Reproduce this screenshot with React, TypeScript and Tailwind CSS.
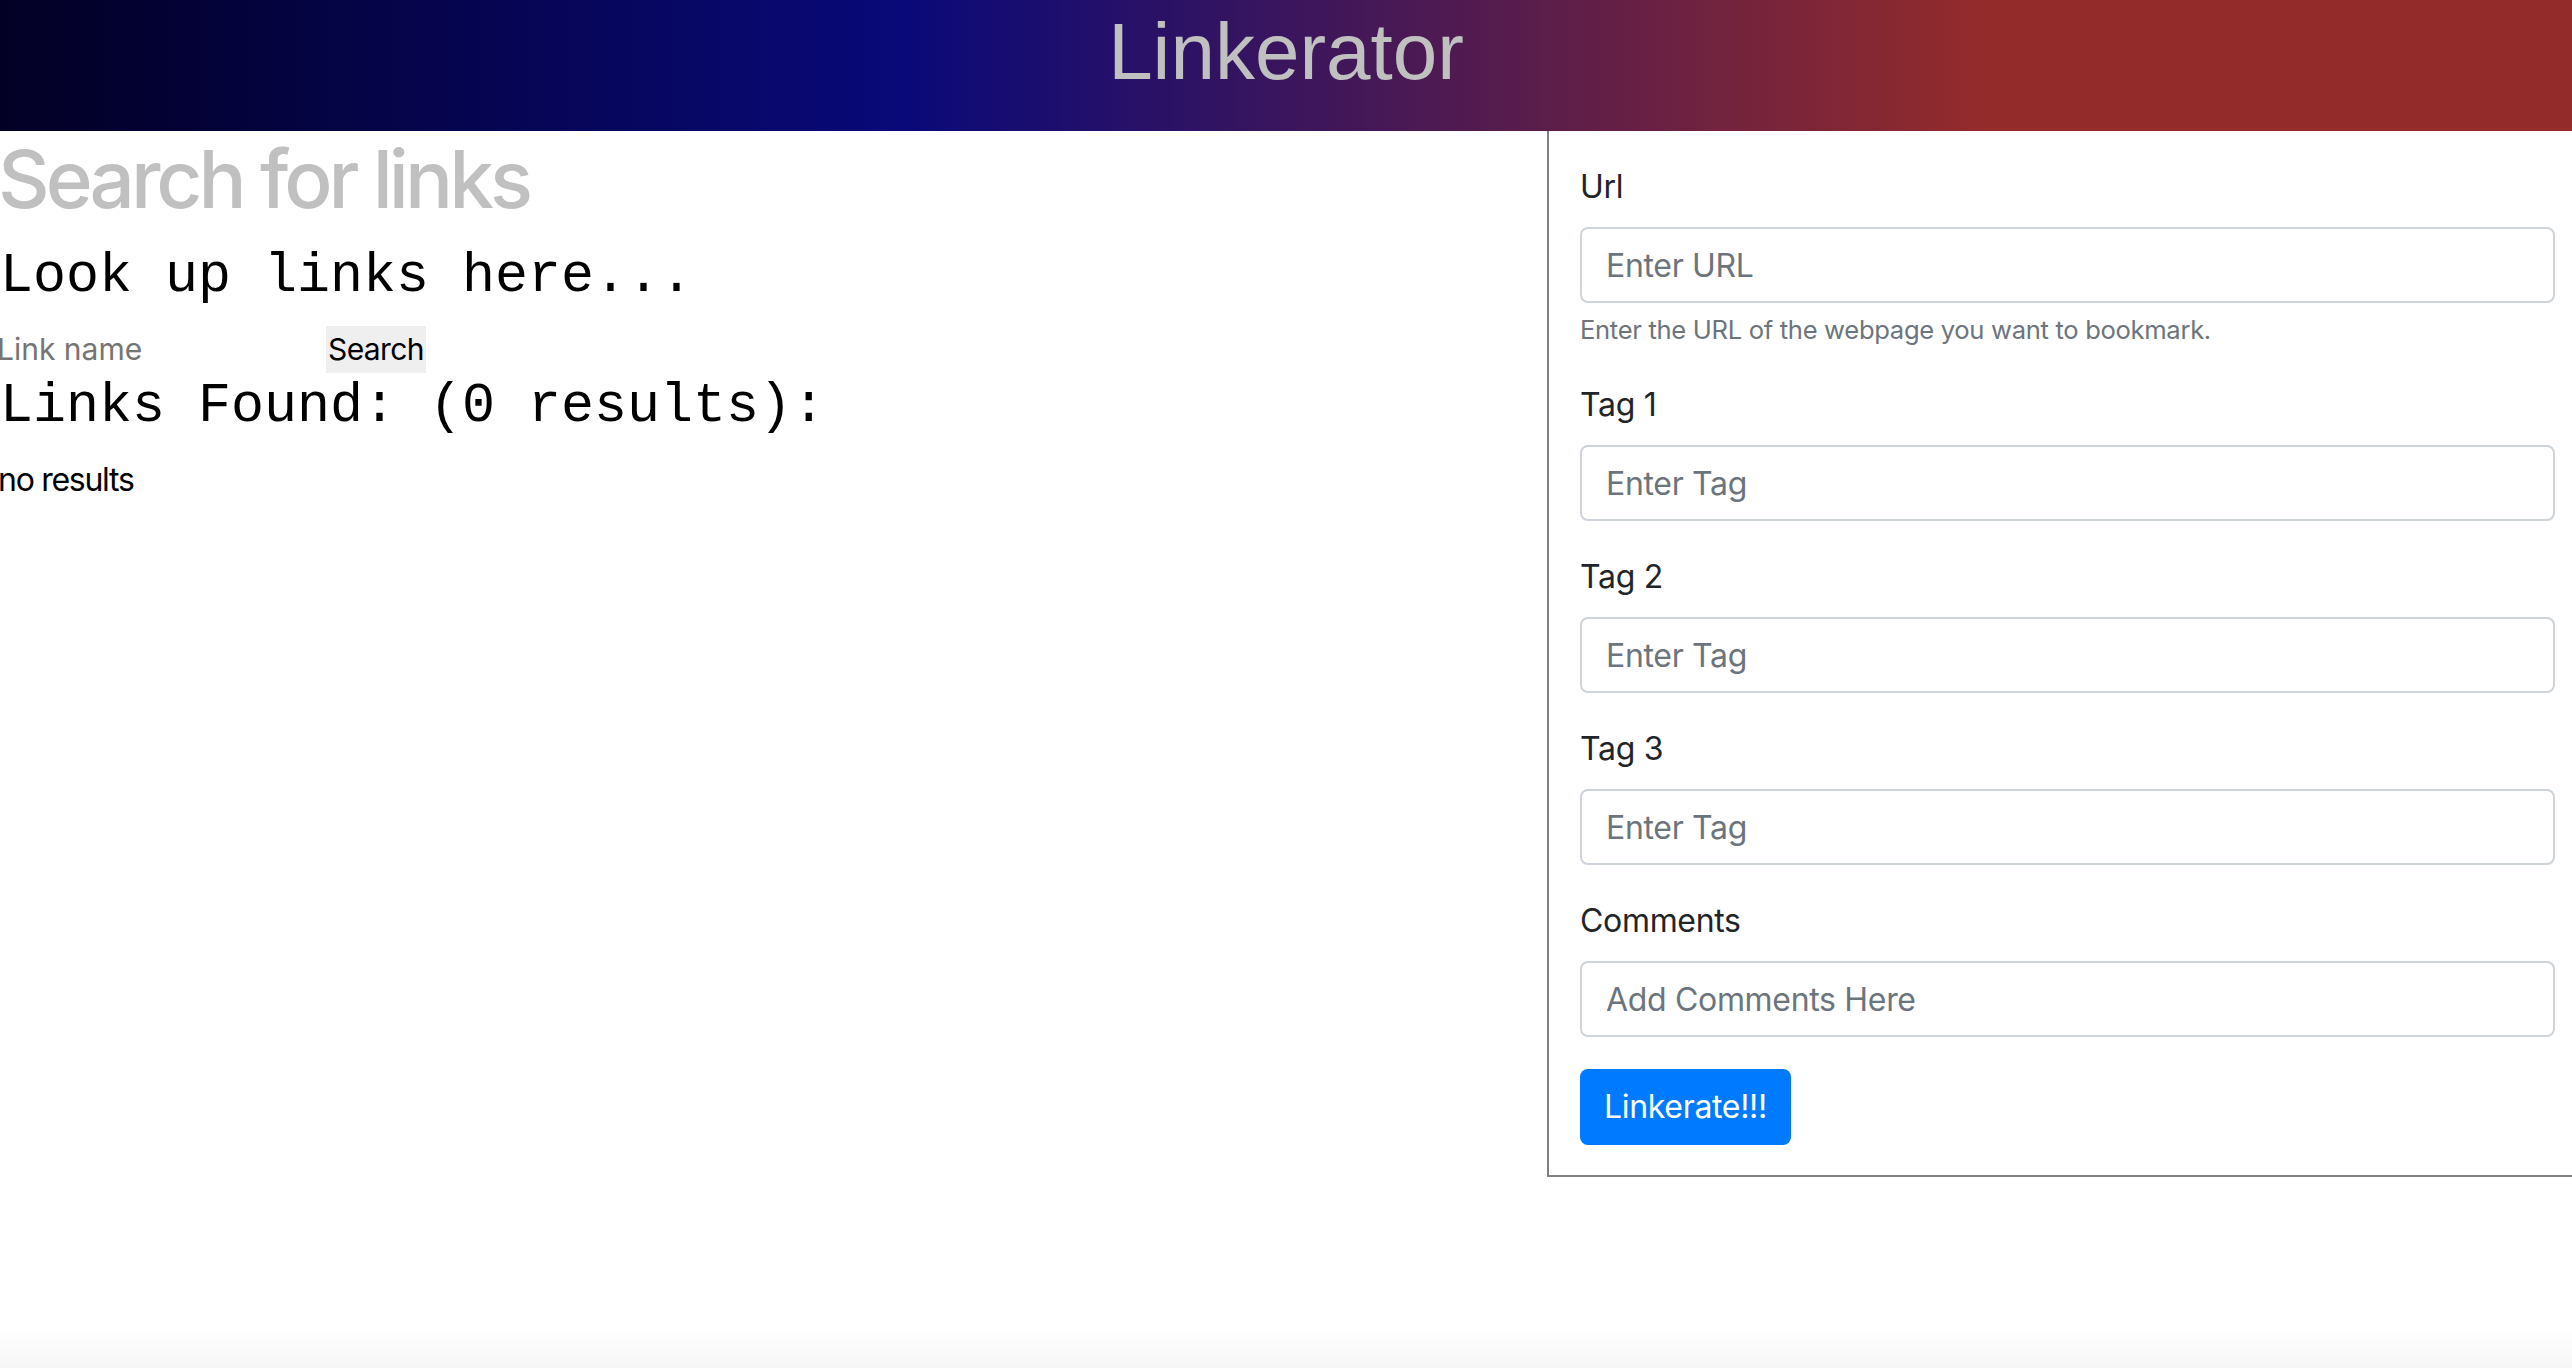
import React from "react";

const fields = [
  { label: "Url", placeholder: "Enter URL", help: "Enter the URL of the webpage you want to bookmark." },
  { label: "Tag 1", placeholder: "Enter Tag" },
  { label: "Tag 2", placeholder: "Enter Tag" },
  { label: "Tag 3", placeholder: "Enter Tag" },
  { label: "Comments", placeholder: "Add Comments Here" },
];

function LinkForm() {
  return (
    <aside className="w-[1025px] shrink-0 border-b-2 border-l-2 border-[#808080] pt-[32px] pb-[30px] pl-[31px] pr-[17px] font-['Inter',sans-serif] text-[32px] leading-normal tracking-[-0.01em] text-[#212529]">
      <form onSubmit={(e) => e.preventDefault()}>
        {fields.map((f) => (
          <div key={f.label} className="mb-[32px]">
            <label className="mb-[16px] block">{f.label}</label>
            <input
              placeholder={f.placeholder}
              className="block h-[76px] w-full rounded-[8px] border-2 border-[#ced4da] bg-white px-[24px] text-[32px] tracking-[-0.01em] outline-none placeholder:text-[#6c757d]"
            />
            {f.help && <small className="mt-[8px] block text-[25.6px] leading-normal text-[#6c757d]">{f.help}</small>}
          </div>
        ))}
        <button className="h-[76px] rounded-[8px] bg-[#007bff] px-[24px] text-[32px] tracking-[-0.01em] text-white">Linkerate!!!</button>
      </form>
    </aside>
  );
}

export default function App() {
  return (
    <div className="min-h-[1368px] bg-[linear-gradient(to_bottom,#ffffff_97%,#f6f6f6)]">
      <header className="flex h-[131px] justify-center bg-[linear-gradient(90deg,#020024_0%,#090979_35%,#932b2b_77%)] pt-[4px]">
        <h1 className="font-['Liberation_Sans',Arial,sans-serif] text-[80px] leading-[1.2] text-[#c0c0c0]">Linkerator</h1>
      </header>
      <main className="flex items-start">
        <section className="min-w-0 flex-1 font-['Inter',sans-serif] text-[32px] leading-normal text-black">
          <h1 className="mb-[16px] -ml-[2px] text-[80px] font-medium leading-[1.2] tracking-[-0.05em] text-[#c0c0c0]">Search for links</h1>
          <h3 className="mb-[16px] font-['Liberation_Mono',monospace] text-[55px] leading-[1.22]">Look up links here...</h3>
          <div className="flex h-[47px] items-stretch">
            <input
              placeholder="Link name"
              className="-ml-[3px] w-[329px] bg-transparent text-[30px] outline-none placeholder:text-[#757575]"
            />
            <button className="bg-[#efefef] px-[2px] text-[30px] tracking-[-0.02em] text-black">Search</button>
          </div>
          <h3 className="mb-[16px] font-['Liberation_Mono',monospace] text-[55px] leading-[1.22]">Links Found: (0 results):</h3>
          <p className="-ml-[2px] tracking-[-0.04em]">no results</p>
        </section>
        <LinkForm />
      </main>
    </div>
  );
}
